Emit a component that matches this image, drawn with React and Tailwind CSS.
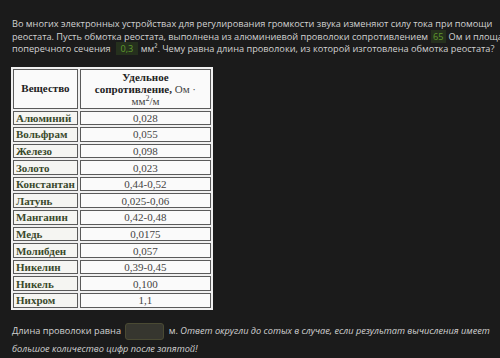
import React from 'react';

const rows = [
  ['Алюминий', '0,028'],
  ['Вольфрам', '0,055'],
  ['Железо', '0,098'],
  ['Золото', '0,023'],
  ['Константан', '0,44-0,52'],
  ['Латунь', '0,025-0,06'],
  ['Манганин', '0,42-0,48'],
  ['Медь', '0,0175'],
  ['Молибден', '0,057'],
  ['Никелин', '0,39-0,45'],
  ['Никель', '0,100'],
  ['Нихром', '1,1'],
];

const Num = ({ children }) => (
  <span className="bg-[#25301d] text-[#5f9a2c] px-[2px] mx-[3px]">{children}</span>
);

export default function App() {
  return (
    <div className="w-[500px] h-[358px] overflow-hidden bg-[#1b1b1b] text-[#d2d2d2] font-['Open_Sans',sans-serif]">
      <div className="pl-[12px] pt-[18px] text-[9.2px] leading-[12.5px]">
        <p className="whitespace-nowrap">
          Во многих электронных устройствах для регулирования громкости звука изменяют силу тока при помощи
        </p>
        <p className="whitespace-nowrap">
          реостата. Пусть обмотка реостата, выполнена из алюминиевой проволоки сопротивлением<Num>65</Num>Ом и площадью
        </p>
        <p className="whitespace-nowrap">
          поперечного сечения <Num>&nbsp;0,3&nbsp;</Num>мм². Чему равна длина проволоки, из которой изготовлена обмотка реостата?
        </p>
      </div>

      <div className="pl-[11px] mt-[11px]">
        <table className="border-separate border-spacing-[2px] bg-[#f0f0f0] font-['Liberation_Serif',serif] text-[11px] w-[202px]">
          <thead>
            <tr>
              <th className="border border-[#5a5a5a] bg-[#fafafa] text-[#222] font-bold w-[64px] h-[40px] p-0">
                Вещество
              </th>
              <th className="border border-[#5a5a5a] bg-[#fafafa] text-[#222] font-bold h-[40px] p-0 leading-[12px]">
                Удельное<br />
                сопротивление, <span className="font-normal text-[#444]">Ом ·</span><br />
                <span className="font-normal text-[#444]">мм<sup className="text-[8px]">2</sup>/м</span>
              </th>
            </tr>
          </thead>
          <tbody>
            {rows.map(([name, value]) => (
              <tr key={name}>
                <td className="border border-[#5a5a5a] bg-[#f5f5f2] text-[#3a4a2c] font-bold h-[14.6px] px-[2px] py-0 leading-[12px] whitespace-nowrap">
                  {name}
                </td>
                <td className="border border-[#5a5a5a] bg-[#fafafa] text-[#444] text-center h-[14.6px] p-0 leading-[12px]">
                  {value}
                </td>
              </tr>
            ))}
          </tbody>
        </table>
      </div>

      <div className="pl-[12px] mt-[12px] text-[9.2px] leading-[17px]">
        <p className="whitespace-nowrap">
          Длина проволоки равна{' '}
          <span className="inline-block align-middle w-[39px] h-[17px] rounded-[3px] border border-[#4a4a33] bg-[#36362f] mx-[2px]"></span>{' '}
          м. <em>Ответ округли до сотых в случае, если результат вычисления имеет</em>
        </p>
        <p className="whitespace-nowrap">
          <em>большое количество цифр после запятой!</em>
        </p>
      </div>
    </div>
  );
}
